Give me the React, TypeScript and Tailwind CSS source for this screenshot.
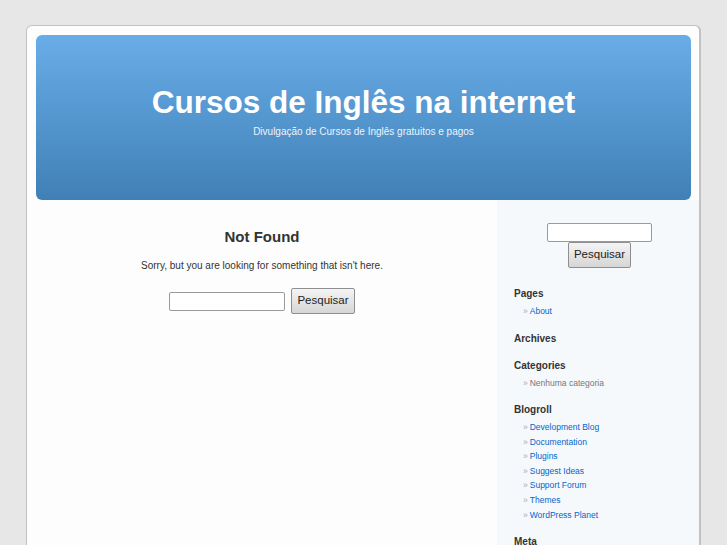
import React from 'react';

const font = { fontFamily: '"Liberation Sans", Arial, sans-serif' };

function SearchForm({ inputWidth, stacked }: { inputWidth: string; stacked?: boolean }) {
  return (
    <form
      className={stacked ? 'flex flex-col items-center' : 'flex items-center justify-center gap-[6px]'}
      onSubmit={(e) => e.preventDefault()}
    >
      <input
        type="text"
        className={`${inputWidth} h-[19px] rounded-[2px] border border-[#9a9a9a] bg-white px-1 text-[11px] outline-none`}
      />
      <button
        type="submit"
        className="h-[26px] rounded-[2px] border border-[#8f8f8f] bg-gradient-to-b from-[#f4f4f4] to-[#d6d6d6] px-[5px] text-[11.5px] text-[#222]"
      >
        Pesquisar
      </button>
    </form>
  );
}

function WidgetList({ title, items, muted }: { title: string; items?: string[]; muted?: boolean }) {
  return (
    <li className="mb-[13px]">
      <h2 className="text-[10px] font-bold leading-[14px] text-[#333]">{title}</h2>
      {items && (
        <ul className="mt-[3px] pl-[9px]">
          {items.map((item) => (
            <li key={item} className="flex h-[14.6px] items-center text-[8.5px]">
              <span className="mr-[2px] text-[#aaa]">»</span>
              {muted ? (
                <span className="text-[#777]">{item}</span>
              ) : (
                <a href="#" className="text-[#0066cc]">
                  {item}
                </a>
              )}
            </li>
          ))}
        </ul>
      )}
    </li>
  );
}

export default function App() {
  return (
    <div className="h-[545px] overflow-hidden bg-[#e7e7e7] pt-[25px]" style={font}>
      <div className="ml-[26px] min-h-[560px] w-[675px] rounded-t-[6px] border border-r-2 border-[#c2c2c2] bg-[#fdfdfd] pt-[9px]">
        {/* Header */}
        <div className="ml-[9px] flex h-[165px] w-[655px] flex-col items-center rounded-[6px] bg-gradient-to-b from-[#69ade8] to-[#4080b6] pt-[49px] text-white">
          <h1 className="text-[31.5px] font-bold leading-[36px]">Cursos de Inglês na internet</h1>
          <div className="mt-[6px] text-[10px] leading-[12px] text-[#eef4fb]">
            Divulgação de Cursos de Inglês gratuitos e pagos
          </div>
        </div>

        <div className="flex">
          {/* Content */}
          <div className="w-[470px] pt-[28px] text-center">
            <h2 className="text-[15px] font-bold leading-[18px] text-[#333]">Not Found</h2>
            <p className="mt-[14px] text-[10px] leading-[12px] text-[#333]">
              Sorry, but you are looking for something that isn't here.
            </p>
            <div className="mt-[16px]">
              <SearchForm inputWidth="w-[116px]" />
            </div>
          </div>

          {/* Sidebar */}
          <div className="min-h-[400px] flex-1 bg-[#f6f9fc] pl-[17px] pt-[23px]">
            <div className="-ml-[14px] mb-[19px]">
              <SearchForm inputWidth="w-[105px]" stacked />
            </div>
            <ul>
              <WidgetList title="Pages" items={['About']} />
              <WidgetList title="Archives" />
              <WidgetList title="Categories" items={['Nenhuma categoria']} muted />
              <WidgetList
                title="Blogroll"
                items={[
                  'Development Blog',
                  'Documentation',
                  'Plugins',
                  'Suggest Ideas',
                  'Support Forum',
                  'Themes',
                  'WordPress Planet',
                ]}
              />
              <WidgetList title="Meta" />
            </ul>
          </div>
        </div>
      </div>
    </div>
  );
}
